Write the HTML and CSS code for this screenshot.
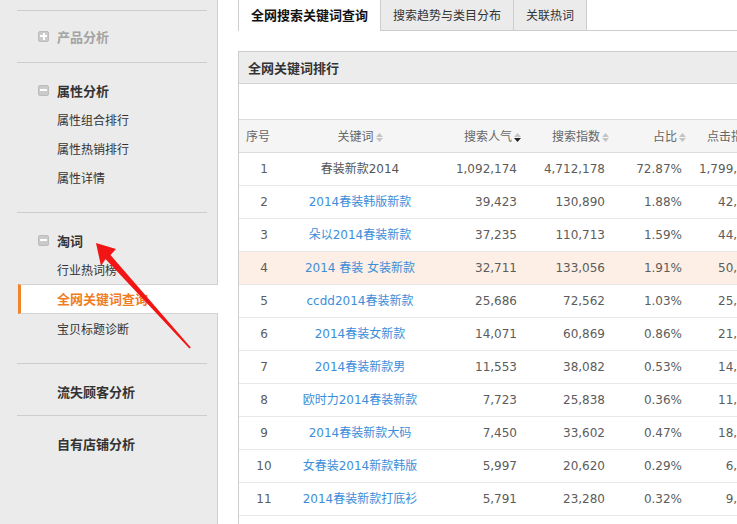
FILE: index.html
```html
<!DOCTYPE html>
<html lang="zh-CN">
<head>
<meta charset="utf-8">
<title>全网关键词查询</title>
<link rel="stylesheet" href="styles.css">
</head>
<body>
<div class="page">
  <aside class="sidebar">
    <div class="sec first">
      <div class="head muted"><span class="ico plus"></span>产品分析</div>
    </div>
    <div class="sec open">
      <div class="head"><span class="ico minus"></span>属性分析</div>
      <ul class="items">
        <li>属性组合排行</li>
        <li>属性热销排行</li>
        <li>属性详情</li>
      </ul>
    </div>
    <div class="sec open">
      <div class="head"><span class="ico minus"></span>淘词</div>
      <ul class="items">
        <li>行业热词榜</li>
        <li class="active">全网关键词查询</li>
        <li>宝贝标题诊断</li>
      </ul>
    </div>
    <div class="sec">
      <div class="head plain">流失顾客分析</div>
    </div>
    <div class="sec">
      <div class="head plain">自有店铺分析</div>
    </div>
  </aside>

  <main class="main">
    <div class="tabs">
      <div class="tab current">全网搜索关键词查询</div>
      <div class="tab">搜索趋势与类目分布</div>
      <div class="tab">关联热词</div>
    </div>

    <section class="panel">
      <div class="panel-head">全网关键词排行</div>
      <div class="panel-space"></div>
      <table class="grid">
        <colgroup>
          <col class="c-no"><col class="c-kw"><col class="c-a"><col class="c-b"><col class="c-c"><col class="c-d">
        </colgroup>
        <thead>
          <tr>
            <th class="th-no">序号</th>
            <th class="th-kw">关键词<span class="sort"><svg width="7" height="9" viewBox="0 0 7 9"><path d="M0 4 L3.5 0 L7 4 Z" fill="#c4c4c4"/><path d="M0 5 L7 5 L3.5 9 Z" fill="#c4c4c4"/></svg></span></th>
            <th>搜索人气<span class="sort"><svg width="7" height="9" viewBox="0 0 7 9"><path d="M0 4 L3.5 0 L7 4 Z" fill="#c4c4c4"/><path d="M0 5 L7 5 L3.5 9 Z" fill="#222"/></svg></span></th>
            <th>搜索指数<span class="sort"><svg width="7" height="9" viewBox="0 0 7 9"><path d="M0 4 L3.5 0 L7 4 Z" fill="#c4c4c4"/><path d="M0 5 L7 5 L3.5 9 Z" fill="#c4c4c4"/></svg></span></th>
            <th>占比<span class="sort"><svg width="7" height="9" viewBox="0 0 7 9"><path d="M0 4 L3.5 0 L7 4 Z" fill="#c4c4c4"/><path d="M0 5 L7 5 L3.5 9 Z" fill="#c4c4c4"/></svg></span></th>
            <th>点击指数<span class="sort"><svg width="7" height="9" viewBox="0 0 7 9"><path d="M0 4 L3.5 0 L7 4 Z" fill="#c4c4c4"/><path d="M0 5 L7 5 L3.5 9 Z" fill="#c4c4c4"/></svg></span></th>
          </tr>
        </thead>
        <tbody>
          <tr><td class="no">1</td><td class="kw plainkw">春装新款2014</td><td>1,092,174</td><td>4,712,178</td><td>72.87%</td><td>1,799,625</td></tr>
          <tr><td class="no">2</td><td class="kw"><a>2014春装韩版新款</a></td><td>39,423</td><td>130,890</td><td>1.88%</td><td>42,136</td></tr>
          <tr><td class="no">3</td><td class="kw"><a>朵以2014春装新款</a></td><td>37,235</td><td>110,713</td><td>1.59%</td><td>44,517</td></tr>
          <tr class="hl"><td class="no">4</td><td class="kw"><a>2014 春装 女装新款</a></td><td>32,711</td><td>133,056</td><td>1.91%</td><td>50,284</td></tr>
          <tr><td class="no">5</td><td class="kw"><a>ccdd2014春装新款</a></td><td>25,686</td><td>72,562</td><td>1.03%</td><td>25,903</td></tr>
          <tr><td class="no">6</td><td class="kw"><a>2014春装女新款</a></td><td>14,071</td><td>60,869</td><td>0.86%</td><td>21,178</td></tr>
          <tr><td class="no">7</td><td class="kw"><a>2014春装新款男</a></td><td>11,553</td><td>38,082</td><td>0.53%</td><td>14,402</td></tr>
          <tr><td class="no">8</td><td class="kw"><a>欧时力2014春装新款</a></td><td>7,723</td><td>25,838</td><td>0.36%</td><td>11,867</td></tr>
          <tr><td class="no">9</td><td class="kw"><a>2014春装新款大码</a></td><td>7,450</td><td>33,602</td><td>0.47%</td><td>18,095</td></tr>
          <tr><td class="no">10</td><td class="kw"><a>女春装2014新款韩版</a></td><td>5,997</td><td>20,620</td><td>0.29%</td><td>6,931</td></tr>
          <tr><td class="no">11</td><td class="kw"><a>2014春装新款打底衫</a></td><td>5,791</td><td>23,280</td><td>0.32%</td><td>9,254</td></tr>
          <tr><td class="no">12</td><td class="kw"><a>2014春装新款外套</a></td><td>5,412</td><td>19,875</td><td>0.27%</td><td>8,106</td></tr>
        </tbody>
      </table>
    </section>
  </main>
</div>

<svg class="arrow" width="737" height="524" viewBox="0 0 737 524">
  <polygon points="96,243 116,249 110.5,255 190.8,347.6 189.4,348.6 105.5,259 101,266" fill="#f21515"/>
</svg>
</body>
</html>
```

FILE: styles.css
```css
html, body {
  margin: 0;
  padding: 0;
  height: 100%;
  overflow: hidden;
  background: #fff;
}

body {
  font-family: "Noto Sans CJK SC", "Noto Sans", sans-serif;
  font-size: 12px;
  color: #333;
  position: relative;
}

.page {
  display: flex;
  height: 524px;
}

/* ---------- sidebar ---------- */
.sidebar {
  width: 217px;
  flex: none;
  background: #ebebeb;
  border-right: 1px solid #cfcfcf;
  padding-top: 10px;
}

.sec {
  margin: 0 10px 0 17px;
  border-top: 1px solid #cdcdcd;
  padding: 12px 0 9px;
}

.sec.first {
  padding: 10px 0 11px;
}

.sec.open {
  padding-bottom: 20px;
}

.head {
  height: 30px;
  display: flex;
  align-items: center;
  padding-left: 21px;
  font-size: 13px;
  font-weight: 700;
  color: #333;
}

.head.muted {
  color: #a3a3a3;
}

.head.plain {
  padding-left: 40px;
}

.ico {
  position: relative;
  width: 9px;
  height: 9px;
  border: 1px solid #bdbdbd;
  border-radius: 2px;
  background: #cacaca;
  margin-right: 8px;
  flex: none;
}

.ico::before {
  content: "";
  position: absolute;
  left: 1px;
  top: 3.5px;
  width: 7px;
  height: 2px;
  background: #fff;
}

.ico.plus::after {
  content: "";
  position: absolute;
  left: 3.5px;
  top: 1px;
  width: 2px;
  height: 7px;
  background: #fff;
}

.items {
  list-style: none;
  margin: 0;
  padding: 0;
}

.items li {
  height: 29px;
  line-height: 29px;
  padding-left: 40px;
  font-size: 12px;
  color: #333;
}

.items li.active {
  height: 28px;
  line-height: 28px;
  margin-right: -11px;
  margin-left: 1px;
  padding-left: 36px;
  background: #fff;
  border-top: 1px solid #d2d2d2;
  border-bottom: 1px solid #d2d2d2;
  border-left: 3px solid #f0842a;
  color: #ef7d22;
  font-weight: 700;
  font-size: 13px;
}

/* ---------- main ---------- */
.main {
  flex: 1;
  min-width: 0;
  overflow: hidden;
  padding-left: 20px;
}

.tabs {
  display: flex;
  height: 30px;
  border-bottom: 1px solid #cdcdcd;
}

.tab {
  height: 30px;
  line-height: 30px;
  padding: 0 12px;
  background: #ebebeb;
  border-right: 1px solid #cdcdcd;
  color: #333;
  font-size: 12px;
  white-space: nowrap;
}

.tab.current {
  height: 31px;
  margin-bottom: -1px;
  background: #fff;
  border-left: 1px solid #cdcdcd;
  font-weight: 700;
  font-size: 13px;
  color: #111;
}

.panel {
  width: 560px;
  margin-top: 20px;
  border: 1px solid #cdcdcd;
  border-right: none;
  border-bottom: none;
}

.panel-head {
  height: 31px;
  line-height: 31px;
  padding-left: 9px;
  background: #ececec;
  border-bottom: 1px solid #d3d3d3;
  font-size: 13px;
  font-weight: 700;
  color: #333;
}

.panel-space {
  height: 35px;
}

.grid {
  width: 531px;
  table-layout: fixed;
  border-collapse: separate;
  border-spacing: 0;
}

.c-no { width: 50px; }
.c-kw { width: 142px; }
.c-a { width: 96px; }
.c-b { width: 88px; }
.c-c { width: 77px; }
.c-d { width: 78px; }

.grid th {
  line-height: 31px;
  padding: 0 6px 1px 0;
  background: #f5f5f5;
  border-top: 1px solid #dcdcdc;
  border-bottom: 1px solid #dcdcdc;
  font-weight: 400;
  color: #666;
  text-align: right;
  white-space: nowrap;
}

.grid th.th-no {
  text-align: left;
  padding: 0 0 1px 7px;
}

.grid th.th-kw {
  text-align: center;
  padding: 0 0 1px;
}

.sort {
  display: inline-block;
  margin-left: 2px;
  vertical-align: -1px;
  line-height: 0;
}

.grid td {
  line-height: 32px;
  padding: 0 10px 0 0;
  border-bottom: 1px solid #e8e8e8;
  font-family: "DejaVu Sans", "Noto Sans CJK SC", sans-serif;
  color: #5c5c5c;
  text-align: right;
  white-space: nowrap;
}

.grid td.no {
  text-align: center;
  padding: 0;
}

.grid td.kw {
  text-align: center;
  padding: 0;
}

.grid td.kw a {
  color: #3d8ed8;
}

.grid td.plainkw {
  color: #555;
}

.grid tr.hl td {
  background: #fdefe5;
}

/* ---------- annotation arrow ---------- */
.arrow {
  position: absolute;
  left: 0;
  top: 0;
  pointer-events: none;
}
```
